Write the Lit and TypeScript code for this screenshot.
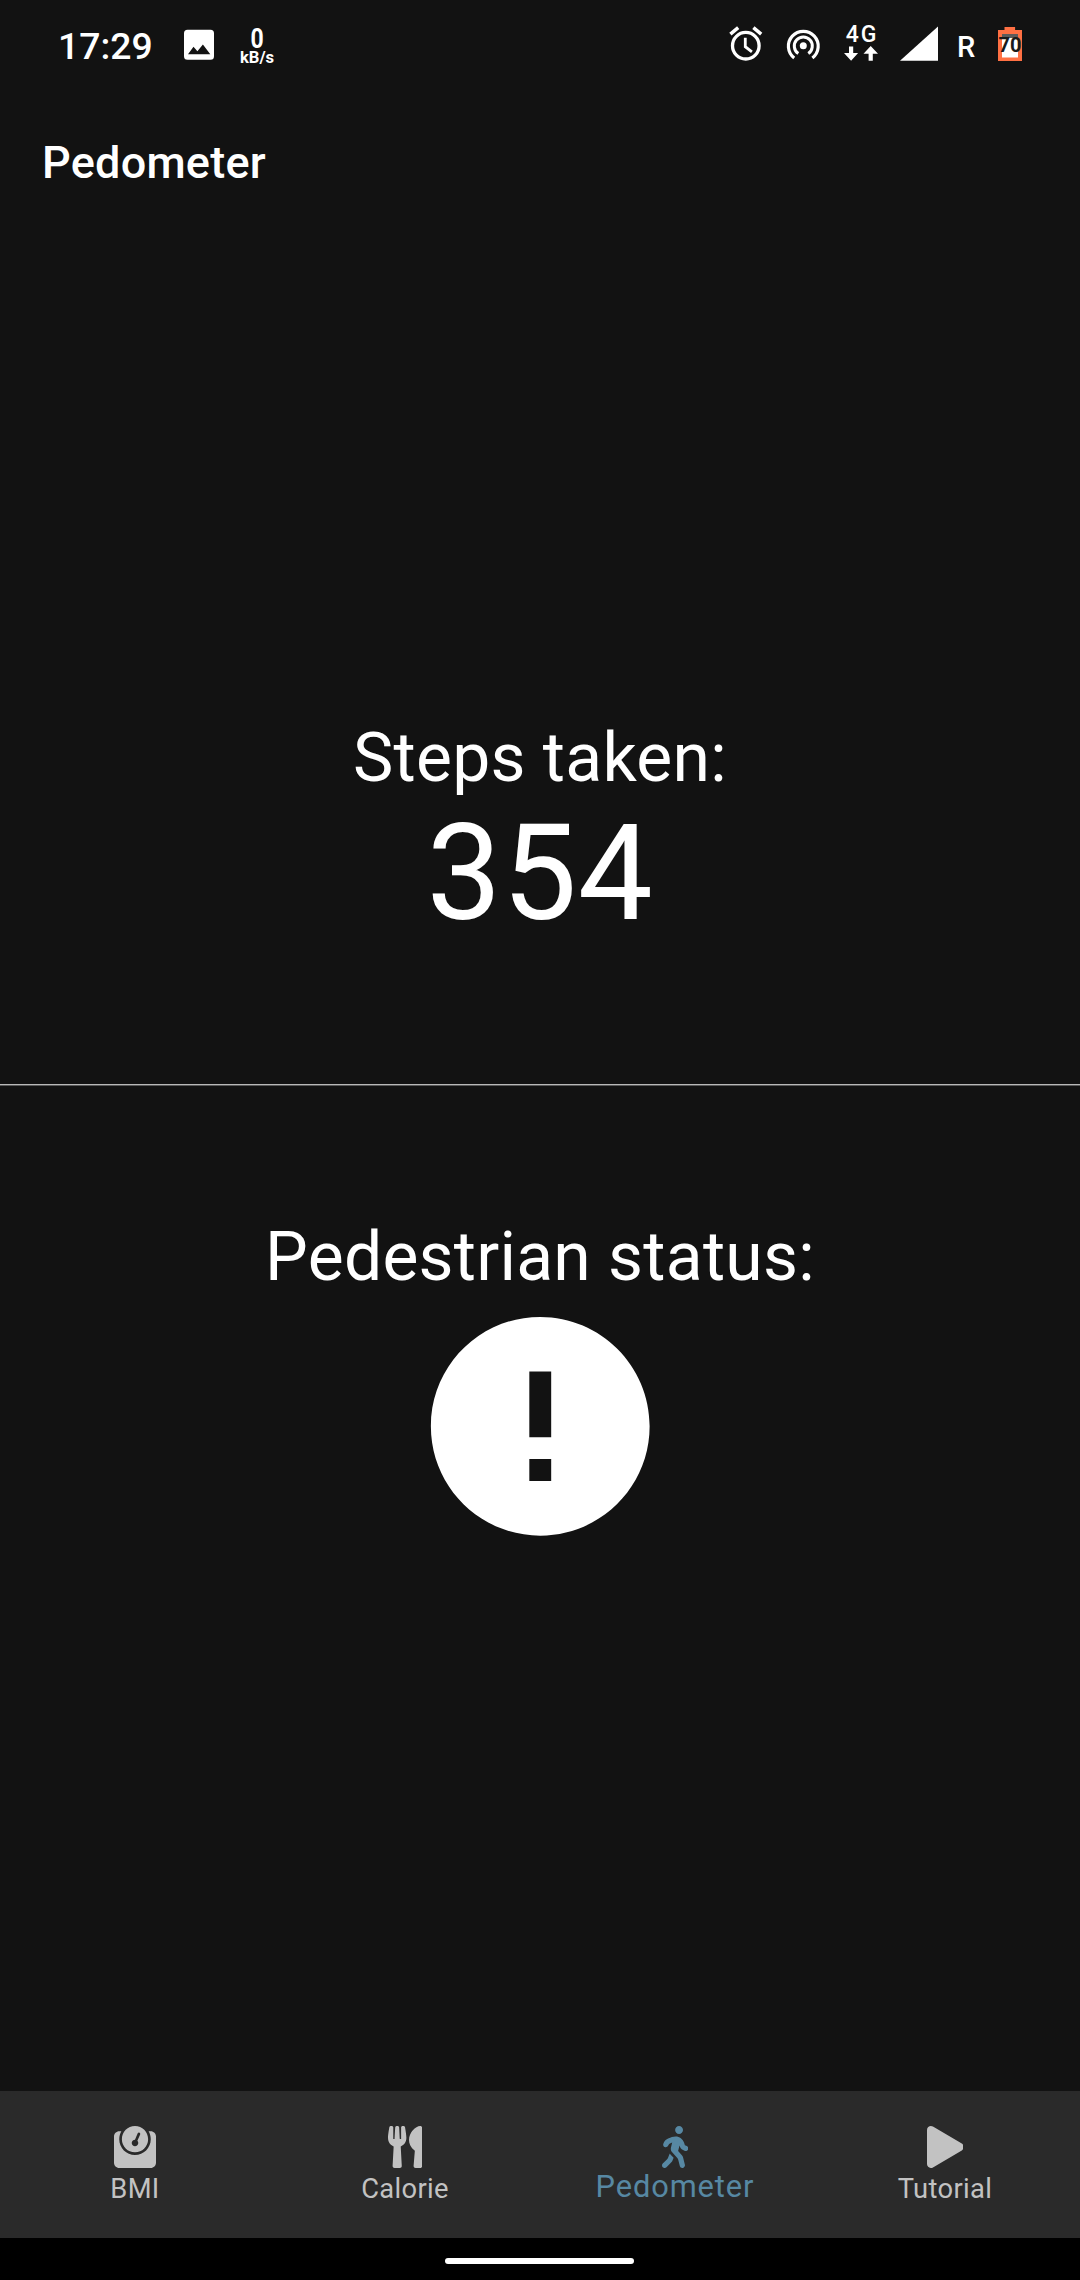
import { LitElement, html, svg, css, type TemplateResult } from "lit";
import { customElement, property } from "lit/decorators.js";
import { classMap } from "lit/directives/class-map.js";

interface NavItem {
  label: string;
  width: number;
  viewBox: string;
  path: TemplateResult;
}

const NAV_ITEMS: NavItem[] = [
  {
    label: "BMI",
    width: 42,
    viewBox: "0 0 512 512",
    path: svg`<path d="M448 64h-25.98C438.44 92.28 448 125.01 448 160c0 105.87-86.13 192-192 192S64 265.87 64 160c0-34.99 9.56-67.72 25.98-96H64C28.71 64 0 92.71 0 128v320c0 35.29 28.71 64 64 64h384c35.29 0 64-28.71 64-64V128c0-35.29-28.71-64-64-64zM256 320c88.37 0 160-71.63 160-160S344.37 0 256 0 96 71.63 96 160s71.63 160 160 160zm-.3-151.94l33.58-78.36c3.5-8.17 12.94-11.92 21.03-8.41 8.12 3.48 11.88 12.89 8.41 21l-33.67 78.55C291.73 188 296 197.45 296 208c0 22.09-17.91 40-40 40s-40-17.91-40-40c0-21.98 17.76-39.77 39.7-39.94z"/>`,
  },
  {
    label: "Calorie",
    width: 34.125,
    viewBox: "0 0 416 512",
    path: svg`<path d="M207.9 15.2c.8 4.7 16.1 94.5 16.1 128.8 0 52.3-27.8 89.6-68.9 104.6L168 486.7c.7 13.7-10.2 25.3-24 25.3H80c-13.7 0-24.7-11.5-24-25.3l12.9-238.1C27.7 233.6 0 196.2 0 144 0 109.6 15.3 19.9 16.1 15.2 19.3-5.1 61.4-5.4 64 16.3v141.2c1.3 3.4 15.1 3.2 16 0 1.4-25.3 7.9-139.2 8-141.8 3.3-20.8 44.7-20.8 47.9 0 .2 2.7 6.6 116.5 8 141.8.9 3.2 14.8 3.4 16 0V16.3c2.6-21.6 44.8-21.4 48-1.1zm119.2 285.7l-15 185.1c-1.2 14 9.9 26 23.9 26h56c13.3 0 24-10.7 24-24V24c0-13.2-10.7-24-24-24-82.5 0-221.4 178.5-64.9 300.9z"/>`,
  },
  {
    label: "Pedometer",
    width: 26.25,
    viewBox: "0 0 320 512",
    path: svg`<path d="M208 96c26.5 0 48-21.5 48-48S234.5 0 208 0s-48 21.5-48 48 21.5 48 48 48zm94.5 149.1l-23.3-11.8-9.7-29.4c-14.7-44.6-55.7-75.8-102.2-75.9-36-.1-55.9 10.1-93.3 25.2-21.6 8.7-39.3 25.2-49.7 46.2L17.6 213c-7.8 15.8-1.5 35 14.2 42.9 15.6 7.9 34.6 1.5 42.5-14.3L81 228c3.5-7 9.3-12.5 16.5-15.4l26.8-10.8-15.2 60.7c-5.2 20.8.4 42.9 14.9 58.8l59.9 65.4c7.2 7.9 12.3 17.4 14.9 27.7l18.3 73.3c4.3 17.1 21.7 27.6 38.8 23.3 17.1-4.3 27.6-21.7 23.3-38.8l-22.2-89c-2.6-10.3-7.7-19.9-14.9-27.7l-45.5-49.7 17.2-68.7 5.5 16.5c5.3 16.1 16.7 29.4 31.7 37l23.3 11.8c15.6 7.9 34.6 1.5 42.5-14.3 7.7-15.7 1.4-35.1-14.3-43zM73.6 385.8c-3.2 8.1-8 15.4-14.2 21.5l-50 50.1c-12.5 12.5-12.5 32.8 0 45.3s32.7 12.5 45.2 0l59.4-59.4c6.1-6.1 10.9-13.4 14.2-21.5l13.5-33.8c-55.3-60.3-38.7-41.8-47.4-53.7l-20.7 51.5z"/>`,
  },
  {
    label: "Tutorial",
    width: 36.75,
    viewBox: "0 0 448 512",
    path: svg`<path d="M424.4 214.7L72.4 6.6C43.8-10.3 0 6.1 0 47.9V464c0 37.5 40.7 60.1 72.4 41.3l352-208c31.4-18.5 31.5-64.1 0-82.6z"/>`,
  },
];

@customElement("phone-status-bar")
export class PhoneStatusBar extends LitElement {
  static styles = css`
    :host {
      display: flex;
      justify-content: space-between;
      box-sizing: border-box;
      height: 92px;
      padding: 22px 58px 0 58px;
      color: #fff;
    }
    .group {
      display: flex;
      align-items: flex-start;
      height: 48px;
    }
    svg {
      display: block;
      flex: none;
    }
    .time {
      width: 126px;
      font-size: 37.3px;
      font-weight: 500;
      line-height: 48px;
      white-space: nowrap;
    }
    .speed {
      display: flex;
      flex-direction: column;
      align-items: center;
      width: 36px;
      margin-left: 25px;
      font-weight: 700;
    }
    .rate {
      font-size: 28px;
      line-height: 23px;
      height: 22px;
      margin-top: 5px;
      transform: scaleX(0.82);
    }
    .unit {
      font-size: 16.6px;
      line-height: 18px;
    }
    .hotspot {
      margin-left: 23px;
    }
    .network {
      display: flex;
      flex-direction: column;
      align-items: center;
      width: 36px;
      margin-left: 21px;
    }
    .gen {
      height: 24px;
      font-size: 23px;
      font-weight: 500;
      line-height: 26px;
      letter-spacing: 2px;
      margin-right: -2px;
    }
    .signal {
      margin-left: 21px;
    }
    .roaming {
      margin-left: 19px;
      font-size: 29px;
      font-weight: 500;
      line-height: 50px;
      width: 20px;
    }
    .battery {
      position: relative;
      width: 24px;
      height: 40px;
      margin-left: 21px;
    }
    .level {
      position: absolute;
      left: -4px;
      top: 11px;
      width: 32px;
      text-align: center;
      color: #1a1a1a;
      font-size: 20px;
      font-weight: 700;
      line-height: 24px;
    }
  `;

  render() {
    return html`
      <div class="group">
        <span class="time">17:29</span>
        <svg width="30" height="40" viewBox="0 0 30 40">
          <path
            fill="#fff"
            fill-rule="evenodd"
            d="M3.5 7.8h23a3.5 3.5 0 0 1 3.5 3.5v23a3.5 3.5 0 0 1-3.5 3.5h-23a3.5 3.5 0 0 1-3.5-3.5v-23a3.5 3.5 0 0 1 3.5-3.5zM4 32.2h22.3L18.9 22.4l-5.5 6.9-3.9-4.6z"
          />
        </svg>
        <div class="speed">
          <span class="rate">0</span>
          <span class="unit">kB/s</span>
        </div>
      </div>
      <div class="group">
        <svg width="34" height="40" viewBox="0 0 34 40" fill="none" stroke="#fff">
          <circle cx="16.8" cy="23.7" r="13.3" stroke-width="3.3" />
          <path d="M1.4 12.1l7.8-6.5M32.2 12.1l-7.8-6.5" stroke-width="3.5" />
          <path d="M16.3 15.7v9l6.6 5.2" stroke-width="2.8" />
        </svg>
        <svg class="hotspot" width="36" height="40" viewBox="0 0 36 40" fill="none" stroke="#fff">
          <circle cx="17.3" cy="23.8" r="3.5" fill="#fff" stroke="none" />
          <path d="M12.3 31.5a9 9 0 1 1 10 0" stroke-width="3" />
          <path d="M8.2 36a14.9 14.9 0 1 1 18.2 0" stroke-width="3.2" />
        </svg>
        <div class="network">
          <span class="gen">4G</span>
          <svg width="34" height="15" viewBox="0 0 34 15" fill="#fff">
            <path d="M5 0.4h4.2v6.6h4.9L7.1 14.8 0 7h5zM24.6 14.8h4.2V7.8h5.2L26.7 0l-7.2 7.8h5.1z" />
          </svg>
        </div>
        <svg class="signal" width="38" height="40" viewBox="0 0 38 40" fill="#fff">
          <path d="M0 38.8L38 4.6v34.2z" />
        </svg>
        <span class="roaming">R</span>
        <div class="battery">
          <svg width="24" height="40" viewBox="0 0 24 40">
            <path fill="#ff7043" d="M6.5 5h10.6v3H24v31H0V8h6.5z" />
            <path fill="#5c5c5c" d="M4 12h16v4H4z" />
            <path fill="#fff" d="M4 16h16v19.5H4z" />
          </svg>
          <span class="level">70</span>
        </div>
      </div>
    `;
  }
}

@customElement("bottom-nav")
export class BottomNav extends LitElement {
  @property() active = "";

  static styles = css`
    :host {
      display: flex;
      height: 147px;
      background: #2a2a2a;
    }
    .item {
      flex: 1;
      display: flex;
      flex-direction: column;
      align-items: center;
      padding-top: 35px;
      color: #c2c2c2;
    }
    .item svg {
      display: block;
      height: 42px;
      fill: currentColor;
    }
    .label {
      margin-top: 3px;
      font-size: 27.3px;
      line-height: 36px;
      letter-spacing: 0.35px;
    }
    .on {
      color: #5788a3;
    }
    .on .label {
      margin-top: 1px;
      font-size: 30.8px;
      letter-spacing: 0.9px;
    }
  `;

  render() {
    return NAV_ITEMS.map(
      (item) => html`
        <div class=${classMap({ item: true, on: item.label === this.active })}>
          <svg width=${item.width} height="42" viewBox=${item.viewBox}>${item.path}</svg>
          <span class="label">${item.label}</span>
        </div>
      `,
    );
  }
}

@customElement("app-root")
export class AppRoot extends LitElement {
  static styles = css`
    :host {
      display: flex;
      flex-direction: column;
      width: 1080px;
      height: 2280px;
      background: #121212;
      color: #fff;
      font-family: Roboto, "Liberation Sans", sans-serif;
      overflow: hidden;
    }
    .title {
      margin: 0;
      padding-left: 42px;
      height: 141px;
      font-size: 45px;
      font-weight: 500;
      line-height: 141px;
      letter-spacing: 0.25px;
    }
    .content {
      flex: 1;
      display: flex;
      flex-direction: column;
      align-items: center;
      padding-top: 485px;
    }
    .caption {
      height: 79px;
      font-size: 67.8px;
      line-height: 81px;
      letter-spacing: 0.25px;
    }
    .steps {
      font-size: 133.6px;
      line-height: 153px;
      letter-spacing: 0.66px;
    }
    .rule {
      align-self: stretch;
      height: 1px;
      margin: 134px 0 131px;
      background: #b8b8b8;
      border-bottom: 1px solid #585858;
    }
    .status {
      display: block;
      margin-top: -1px;
    }
    .gesture {
      display: flex;
      justify-content: center;
      height: 42px;
      padding-top: 20px;
      box-sizing: border-box;
      background: #000;
    }
    .pill {
      width: 189px;
      height: 6px;
      margin-right: 1px;
      border-radius: 3px;
      background: #fff;
    }
  `;

  render() {
    return html`
      <phone-status-bar></phone-status-bar>
      <h1 class="title">Pedometer</h1>
      <main class="content">
        <div class="caption">Steps taken:</div>
        <div class="steps">354</div>
        <div class="rule"></div>
        <div class="caption">Pedestrian status:</div>
        <svg class="status" width="262.5" height="262.5" viewBox="0 0 24 24" fill="#fff">
          <path
            d="M12 2C6.48 2 2 6.48 2 12s4.48 10 10 10 10-4.48 10-10S17.52 2 12 2zm1 15h-2v-2h2v2zm0-4h-2V7h2v6z"
          />
        </svg>
      </main>
      <bottom-nav active="Pedometer"></bottom-nav>
      <div class="gesture"><div class="pill"></div></div>
    `;
  }
}
